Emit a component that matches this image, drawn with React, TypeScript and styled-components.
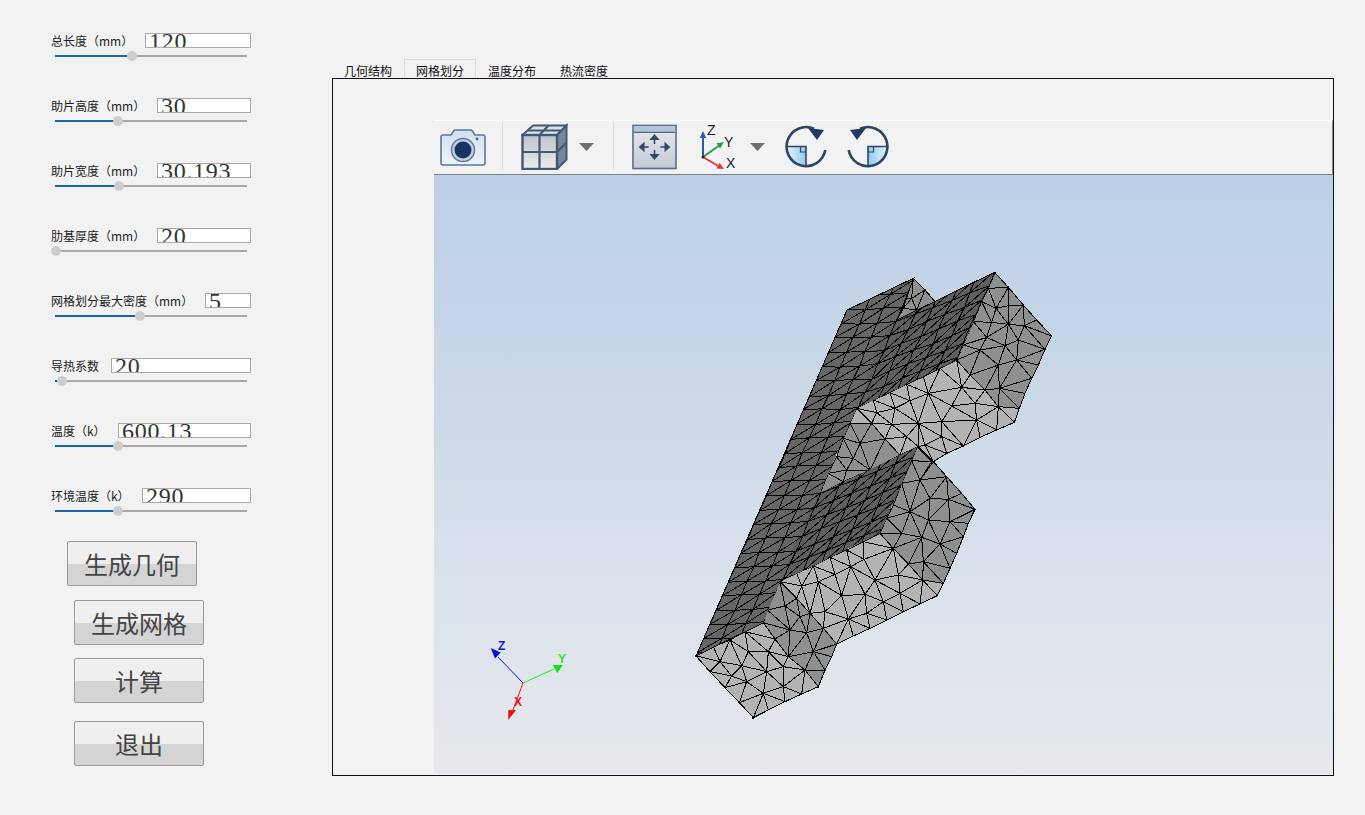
import React from "react";
import styled, { createGlobalStyle } from "styled-components";

type P = [number, number];

const Global = createGlobalStyle`
  html, body { margin: 0; padding: 0; background: #f2f2f2; }
  body { width: 1365px; height: 815px; overflow: hidden; font-family: "Noto Sans CJK SC", "Liberation Sans", sans-serif; }
`;

const Page = styled.div`
  display: flex;
  width: 1365px;
  height: 815px;
  background: #f2f2f2;
`;
const Sidebar = styled.aside`
  width: 332px;
  flex: none;
  padding: 33px 0 0 51px;
  box-sizing: border-box;
  display: flex;
  flex-direction: column;
`;
const ParamList = styled.div`
  width: 200px;
  display: flex;
  flex-direction: column;
  gap: 40px;
`;
const Param = styled.div`
  height: 25px;
  display: flex;
  flex-direction: column;
`;
const ParamHead = styled.div`
  height: 15px;
  display: flex;
  justify-content: space-between;
  align-items: center;
`;
const Label = styled.label`
  font-size: 12px;
  line-height: 15px;
  color: #222;
  white-space: nowrap;
`;
const Field = styled.div<{ $width: number }>`
  width: ${(p) => p.$width}px;
  height: 15px;
  box-sizing: border-box;
  border: 1px solid #a9a9a9;
  background: #fff;
  overflow: hidden;
  padding-left: 3px;
  font-family: "Liberation Serif", serif;
  font-size: 24px;
  letter-spacing: 0.7px;
  line-height: 14px;
  color: #333;
  white-space: nowrap;
`;
const Track = styled.div`
  position: relative;
  height: 2px;
  margin: 7px 4px 0;
  background: #a8a8a8;
`;
const Fill = styled.div<{ $pos: number }>`
  width: ${(p) => p.$pos}px;
  height: 2px;
  background: #1766ad;
`;
const Thumb = styled.div<{ $pos: number }>`
  position: absolute;
  left: ${(p) => p.$pos - 5}px;
  top: -4px;
  width: 10px;
  height: 10px;
  border-radius: 50%;
  background: #cdcdcd;
`;
const Actions = styled.div`
  display: flex;
  flex-direction: column;
  margin-top: 28px;
`;
const ActionButton = styled.button<{ $left: number; $top: number }>`
  width: 130px;
  height: 45px;
  margin: ${(p) => p.$top}px 0 0 ${(p) => p.$left}px;
  padding: 0;
  box-sizing: border-box;
  border: 1px solid #9a9a9a;
  border-radius: 2px;
  background: linear-gradient(#efefef 0, #efefef 52%, #d4d4d4 52%, #d4d4d4 100%);
  font-family: "Noto Sans CJK SC", "Liberation Sans", sans-serif;
  font-size: 24px;
  line-height: 41px;
  color: #444;
`;
const Main = styled.main`
  padding-top: 59px;
  display: flex;
  flex-direction: column;
`;
const TabBar = styled.div`
  display: flex;
  height: 19px;
`;
const Tab = styled.div<{ $active?: boolean }>`
  width: 72px;
  height: 19px;
  box-sizing: border-box;
  text-align: center;
  font-size: 12px;
  line-height: 21px;
  color: #111;
  background: ${(p) => (p.$active ? "#f2f2f2" : "transparent")};
  border: 1px solid ${(p) => (p.$active ? "#d9d9d9" : "transparent")};
  border-bottom: none;
`;
const Pane = styled.div`
  width: 1002px;
  height: 698px;
  box-sizing: border-box;
  border: 1px solid #111;
  padding: 41px 0 0 101px;
  display: flex;
  flex-direction: column;
`;
const Toolbar = styled.div`
  width: 899px;
  height: 55px;
  box-sizing: border-box;
  flex: none;
  display: flex;
  align-items: center;
  padding: 0 0 4px 6px;
  background: #f2f2f2;
  border-top: 1px solid #fff;
  border-right: 1px solid #8a8a8a;
  border-bottom: 1px solid #7f7f7f;
`;
const ToolIcon = styled.svg<{ $left?: number }>`
  display: block;
  flex: none;
  margin-left: ${(p) => p.$left ?? 0}px;
`;
const Separator = styled.div<{ $left: number }>`
  width: 1px;
  height: 47px;
  flex: none;
  margin-left: ${(p) => p.$left}px;
  background: #d8d8d8;
`;
const Viewport = styled.div`
  width: 899px;
  height: 599px;
  flex: none;
  background: linear-gradient(#bbcfe6 0%, #ccd9e8 40%, #dce3ec 72%, #e6e8ec 100%);
`;
const Scene = styled.svg`
  display: block;
  width: 899px;
  height: 599px;
`;

const z4 = (x: number, y: number): P => [680 + x / 3, 260 + y / 3];
const z5 = (x: number, y: number): P => [680 + x / 3, 440 + y / 3];
const mapAll = (f: (x: number, y: number) => P, a: number[][]) => a.map(([x, y]) => f(x, y));

function inPoly(p: P, poly: P[]) {
  let c = false;
  for (let i = 0, j = poly.length - 1; i < poly.length; j = i++) {
    const [xi, yi] = poly[i];
    const [xj, yj] = poly[j];
    if (yi > p[1] !== yj > p[1] && p[0] < ((xj - xi) * (p[1] - yi)) / (yj - yi) + xi) c = !c;
  }
  return c;
}

function delaunay(pts: P[]) {
  const all: P[] = [...pts, [-5000, -5000], [9000, -5000], [1000, 9000]];
  const n = pts.length;
  let tris: number[][] = [[n, n + 1, n + 2]];
  const inCircle = (t: number[], p: P) => {
    const [a, b, c] = t.map((i) => all[i]);
    const d = 2 * (a[0] * (b[1] - c[1]) + b[0] * (c[1] - a[1]) + c[0] * (a[1] - b[1]));
    const s = (q: P) => q[0] * q[0] + q[1] * q[1];
    const ux = (s(a) * (b[1] - c[1]) + s(b) * (c[1] - a[1]) + s(c) * (a[1] - b[1])) / d;
    const uy = (s(a) * (c[0] - b[0]) + s(b) * (a[0] - c[0]) + s(c) * (b[0] - a[0])) / d;
    return (p[0] - ux) ** 2 + (p[1] - uy) ** 2 < (a[0] - ux) ** 2 + (a[1] - uy) ** 2;
  };
  for (let i = 0; i < n; i++) {
    const bad = tris.filter((t) => inCircle(t, all[i]));
    const edges = new Map<string, number[]>();
    bad.forEach((t) => {
      [[t[0], t[1]], [t[1], t[2]], [t[2], t[0]]].forEach(([u, v]) => {
        const k = u < v ? `${u}_${v}` : `${v}_${u}`;
        if (edges.has(k)) edges.delete(k);
        else edges.set(k, [u, v]);
      });
    });
    tris = tris.filter((t) => !bad.includes(t));
    edges.forEach(([u, v]) => tris.push([u, v, i]));
  }
  return tris.filter((t) => t.every((i) => i < n)).map((t) => t.map((i) => pts[i]));
}

function meshPath(boundary: P[], interior: P[]) {
  const tris = delaunay([...boundary, ...interior]);
  let d = "";
  tris.forEach(([a, b, c]) => {
    const m: P = [(a[0] + b[0] + c[0]) / 3, (a[1] + b[1] + c[1]) / 3];
    if (inPoly(m, boundary)) d += `M${a[0]} ${a[1]}L${b[0]} ${b[1]}L${c[0]} ${c[1]}Z`;
  });
  return d;
}

const MED = "#8f8f8f";
const LIGHT = "#b3b3b3";
const DARK = "#666666";

const faces: { fill: string; b: P[]; i: P[] }[] = [
  {
    fill: MED,
    b: mapAll(z4, [[700, 55], [735, 90], [765, 125], [710, 150], [650, 180], [680, 115]]),
    i: mapAll(z4, [[670, 145], [695, 115]]),
  },
  {
    fill: MED,
    b: mapAll(z4, [[945, 38], [985, 82], [1030, 135], [1070, 180], [1115, 228], [1095, 268], [1075, 315], [1055, 355], [1035, 400], [1018, 445], [955, 440], [915, 390], [870, 345], [830, 300], [850, 255], [880, 185], [905, 125], [925, 85]]),
    i: mapAll(z4, [[985, 137], [948, 145], [1033, 197], [985, 193], [935, 187], [920, 232], [975, 257], [1015, 240], [900, 270], [955, 315], [1010, 300], [958, 385]]),
  },
  {
    fill: LIGHT,
    b: mapAll(z4, [[530, 445], [580, 420], [630, 398], [680, 373], [730, 350], [780, 325], [830, 300], [870, 345], [915, 390], [955, 440], [1018, 445], [1003, 487], [950, 510], [900, 532], [850, 558], [800, 580], [760, 605], [715, 560], [660, 585], [615, 537], [575, 490], [510, 490]]),
    i: mapAll(z4, [[590, 458], [645, 445], [690, 422], [745, 400], [845, 382], [815, 438], [885, 430], [715, 490], [785, 485], [890, 480], [635, 493], [735, 555], [785, 530], [680, 530]]),
  },
  {
    fill: MED,
    b: mapAll(z4, [[510, 490], [575, 490], [615, 537], [660, 585], [570, 630], [490, 665], [420, 700], [445, 640], [470, 590], [490, 535]]),
    i: mapAll(z4, [[520, 595], [500, 630], [540, 550]]),
  },
  {
    fill: MED,
    b: mapAll(z5, [[712, 20], [760, 65], [800, 110], [845, 160], [885, 208], [865, 250], [850, 290], [830, 340], [810, 385], [790, 430], [728, 420], [685, 372], [640, 325], [600, 280], [620, 235], [640, 195], [665, 130], [695, 62]]),
    i: mapAll(z5, [[755, 65], [720, 120], [750, 175], [805, 178], [690, 215], [745, 240], [810, 245], [725, 292], [780, 312], [730, 365], [665, 280]]),
  },
  {
    fill: LIGHT,
    b: mapAll(z5, [[300, 425], [350, 400], [400, 378], [450, 352], [500, 330], [550, 305], [600, 280], [640, 325], [685, 372], [728, 420], [790, 430], [772, 467], [720, 492], [670, 515], [620, 540], [570, 565], [520, 588], [470, 612], [430, 565], [390, 520], [350, 475]]),
    i: mapAll(z5, [[365, 438], [415, 425], [465, 403], [512, 380], [552, 358], [585, 420], [655, 405], [485, 467], [555, 463], [610, 485], [660, 460], [505, 537], [435, 515], [560, 520]]),
  },
  {
    fill: MED,
    b: mapAll(z5, [[300, 425], [350, 475], [390, 520], [430, 565], [470, 612], [455, 650], [435, 690], [415, 740], [375, 690], [325, 650], [285, 597], [250, 548], [262, 510]]),
    i: mapAll(z5, [[315, 498], [330, 570], [380, 578], [400, 635], [360, 530]]),
  },
  {
    fill: LIGHT,
    b: mapAll(z5, [[47, 647], [100, 620], [150, 600], [195, 575], [250, 548], [285, 597], [325, 650], [375, 690], [415, 740], [365, 762], [315, 785], [265, 810], [220, 833], [178, 788], [135, 743], [90, 695]]),
    i: mapAll(z5, [[120, 665], [185, 677], [155, 708], [205, 635], [265, 635], [260, 695], [310, 680], [200, 725], [250, 760], [310, 740]]),
  },
];

const darkPoly: P[] = [[847, 310], [914, 278], [897, 320], [995, 272], [982, 302], [957, 360], [857, 408], [850, 423], [820, 493], [917, 447], [912, 461], [880, 533], [780, 582], [763, 623], [696, 656]];

function jitter(r: number, c: number) {
  const s = Math.sin(r * 12.9898 + c * 78.233) * 43758.5453;
  return s - Math.floor(s) - 0.5;
}
function lattice(r: number, c: number): P {
  const x0 = 847 - 6.24 * r + 18.5 * c;
  const y0 = 310 + 14.3 * r - 0.6 * c;
  const dx = x0 - (847 - ((y0 - 310) * 151) / 346);
  const up = dx > 52 ? (dx - 52) * 0.36 : 0;
  return [x0 + jitter(r, c) * 1.6, y0 - up + jitter(c, r) * 1.6];
}
const darkLines = (() => {
  let d = "";
  for (let r = -10; r < 34; r++) {
    for (let c = -3; c < 16; c++) {
      const a = lattice(r, c);
      const b = lattice(r, c + 1);
      const e = lattice(r + 1, c);
      d += `M${a[0]} ${a[1]}L${b[0]} ${b[1]}M${a[0]} ${a[1]}L${e[0]} ${e[1]}M${e[0]} ${e[1]}L${b[0]} ${b[1]}`;
    }
  }
  return d;
})();
const toPts = (a: P[]) => a.map((p) => p.join(",")).join(" ");

const MeshModel = () => (
  <g shapeRendering="crispEdges">
    <defs>
      <clipPath id="darkClip">
        <polygon points={toPts(darkPoly)} />
      </clipPath>
    </defs>
    {faces.map((f, i) => (
      <g key={i}>
        <polygon points={toPts(f.b)} fill={f.fill} stroke="#000" strokeWidth={1} />
        <path d={meshPath(f.b, f.i)} fill="none" stroke="#000" strokeWidth={1} />
      </g>
    ))}
    <polygon points={toPts(darkPoly)} fill={DARK} />
    <polygon points="897,320 995,272 982,302 957,360 857,408 880,340" fill="#5e5e5e" />
    <polygon points="820,493 917,447 912,461 880,533 780,582 800,530" fill="#5e5e5e" />
    <path d={darkLines} fill="none" stroke="#000" strokeWidth={1} clipPath="url(#darkClip)" />
    <polyline points="847,310 914,278 897,320 995,272" fill="none" stroke="#000" strokeWidth={1} />
    <polyline points="847,310 696,656 763,623" fill="none" stroke="#000" strokeWidth={1} />
  </g>
);

const TriadLabel = styled.text`
  font-family: "Liberation Sans", sans-serif;
  font-size: 12px;
  font-weight: 700;
`;
const Triad = () => (
  <g>
    <line x1={523} y1={683} x2={498} y2={657} stroke="#1111dd" />
    <line x1={523} y1={683} x2={554} y2={669} stroke="#22ee22" />
    <line x1={523} y1={683} x2={513} y2={710} stroke="#ee1111" />
    <polygon points="490.7,648 500.7,652.5 495,658.5" fill="#0b0bd8" />
    <polygon points="552.7,665 562.7,665 557.3,673.3" fill="#16e016" />
    <polygon points="508.3,710 516,710 508.3,720" fill="#e81010" />
    <TriadLabel x={498} y={650} fill="#1515d0">Z</TriadLabel>
    <TriadLabel x={558} y={663} fill="#33e033">Y</TriadLabel>
    <TriadLabel x={514} y={706} fill="#e81515">X</TriadLabel>
  </g>
);

const AxisLabel = styled.text`
  font-family: "Liberation Sans", sans-serif;
  font-size: 14px;
  fill: #1a1a1a;
`;

const CameraIcon = () => (
  <ToolIcon width="46" height="40" viewBox="0 -2 46 40">
    <defs>
      <linearGradient id="camBody" x1="0" y1="0" x2="0" y2="1">
        <stop offset="0" stopColor="#cfe0f2" />
        <stop offset="1" stopColor="#eef3f8" />
      </linearGradient>
    </defs>
    <path d="M3 7h8l3-4.500q.5-.5 1-.5h16q.5 0 1 .5l3 4.500h8q2 0 2 2v26q0 2-2 2H3q-2 0-2-2V9q0-2 2-2z" fill="url(#camBody)" stroke="#5d7893" strokeWidth="1.6" />
    <circle cx="23" cy="22" r="11.5" fill="#c3d2e2" stroke="#5d7893" strokeWidth="1.4" />
    <circle cx="23" cy="22" r="8.5" fill="#1b3361" />
    <circle cx="37" cy="11" r="1.4" fill="#4a6580" />
  </ToolIcon>
);
const CubeIcon = () => (
  <ToolIcon $left={18} width="47" height="48" viewBox="0 -2 47 48">
    <defs>
      <linearGradient id="cubeFront" x1="0" y1="0" x2="0" y2="1">
        <stop offset="0" stopColor="#bfc4cc" />
        <stop offset="1" stopColor="#ebebeb" />
      </linearGradient>
    </defs>
    <path d="M12 1.500h33.500L36 11H1.500z" fill="#dfe3e8" stroke="#425873" strokeWidth="2" />
    <path d="M36 11l9.500-9.500v34L36 45z" fill="#76869b" stroke="#425873" strokeWidth="2" />
    <rect x="1.500" y="11" width="34.500" height="34" fill="url(#cubeFront)" stroke="#425873" strokeWidth="2.400" />
    <path d="M18.500 11v34M1.500 28H36M36 28l9.500-9.500M18.500 11l9-9.500M7 6.500h34" stroke="#425873" strokeWidth="2.200" fill="none" />
  </ToolIcon>
);
const Caret = ({ left }: { left: number }) => (
  <ToolIcon $left={left} width="15" height="12" viewBox="0 -3 15 12">
    <path d="M0 0h15L7.500 8z" fill="#6f6f6f" />
  </ToolIcon>
);
const FitIcon = () => (
  <ToolIcon $left={18} width="45" height="48" viewBox="0 -2 46 48">
    <defs>
      <linearGradient id="fitBody" x1="0" y1="0" x2="0" y2="1">
        <stop offset="0" stopColor="#e8eaee" />
        <stop offset="1" stopColor="#c4c9d5" />
      </linearGradient>
    </defs>
    <rect x="1" y="1" width="44" height="44" fill="url(#fitBody)" stroke="#546c88" strokeWidth="1.6" />
    <rect x="2" y="2" width="42" height="6" fill="#b5c5da" />
    <path d="M2 8h42" stroke="#546c88" strokeWidth="1.2" />
    <g fill="#2e4867" stroke="#2e4867" strokeWidth="1.6">
      <path d="M23 20V14" fill="none" />
      <path d="M23 11l-3.500 4h7z" />
      <path d="M23 32V26" fill="none" />
      <path d="M23 35l-3.500-4h7z" />
      <path d="M17 23H11" fill="none" />
      <path d="M8 23l4-3.500v7z" />
      <path d="M29 23H35" fill="none" />
      <path d="M38 23l-4-3.500v7z" />
    </g>
  </ToolIcon>
);
const AxesIcon = () => (
  <ToolIcon $left={23} width="38" height="48" viewBox="0 -2 38 48">
    <path d="M3 33V12" stroke="#2a5aa8" strokeWidth="2" fill="none" />
    <path d="M3 7l-3.200 7h6.400z" fill="#2a5aa8" />
    <path d="M3 33l17-12" stroke="#2f9a4a" strokeWidth="2" fill="none" />
    <path d="M24 18l-7.500 1.200 3.600 5.200z" fill="#2f9a4a" />
    <path d="M3 33l17 10" stroke="#dd3a3a" strokeWidth="2" fill="none" />
    <path d="M24 45l-7.600-.6 3.200-5.600z" fill="#dd3a3a" />
    <circle cx="3" cy="33" r="1.500" fill="#222" />
    <AxisLabel x="7" y="11">Z</AxisLabel>
    <AxisLabel x="24" y="23">Y</AxisLabel>
    <AxisLabel x="26" y="44">X</AxisLabel>
  </ToolIcon>
);
const RotateIcon = ({ left, mirror }: { left: number; mirror?: boolean }) => (
  <ToolIcon $left={left} width="44" height="44" viewBox="0 0 44 44">
    <defs>
      <linearGradient id={mirror ? "rotB" : "rotA"} x1="0" y1="0" x2="1" y2="0">
        <stop offset="0" stopColor="#e4f2fb" />
        <stop offset="1" stopColor="#8fcdec" />
      </linearGradient>
    </defs>
    <g transform={mirror ? "matrix(-1 0 0 1 44 0)" : undefined}>
      <path d="M2.500 22.500A19.500 19.500 0 0 0 22 42V22.500z" fill={`url(#${mirror ? "rotB" : "rotA"})`} />
      <path d="M30 4.800A19.500 19.500 0 1 0 41.300 26" fill="none" stroke="#2d4560" strokeWidth="2.600" />
      <path d="M2.500 22.500H22V42" fill="none" stroke="#2d4560" strokeWidth="1.600" />
      <path d="M16.500 22.500v5.500H22" fill="none" stroke="#2d4560" strokeWidth="1.200" />
      <path d="M24 4l16 2-7 10z" fill="#1f3c66" />
    </g>
  </ToolIcon>
);

const params = [
  { label: "总长度（mm）", value: "120", width: 106, pos: 77 },
  { label: "助片高度（mm）", value: "30", width: 94, pos: 63 },
  { label: "助片宽度（mm）", value: "30.193", width: 94, pos: 64 },
  { label: "肋基厚度（mm）", value: "20", width: 94, pos: 1 },
  { label: "网格划分最大密度（mm）", value: "5", width: 46, pos: 85 },
  { label: "导热系数", value: "20", width: 140, pos: 7 },
  { label: "温度（k）", value: "600.13", width: 133, pos: 63 },
  { label: "环境温度（k）", value: "290", width: 109, pos: 63 },
];
const actions = [
  { text: "生成几何", left: 16, top: 0 },
  { text: "生成网格", left: 23, top: 14 },
  { text: "计算", left: 23, top: 13 },
  { text: "退出", left: 23, top: 18 },
];
const tabs = ["几何结构", "网格划分", "温度分布", "热流密度"];

export default function App() {
  return (
    <Page>
      <Global />
      <Sidebar>
        <ParamList>
          {params.map((p) => (
            <Param key={p.label}>
              <ParamHead>
                <Label>{p.label}</Label>
                <Field $width={p.width}>{p.value}</Field>
              </ParamHead>
              <Track>
                <Fill $pos={p.pos} />
                <Thumb $pos={p.pos} />
              </Track>
            </Param>
          ))}
        </ParamList>
        <Actions>
          {actions.map((a) => (
            <ActionButton key={a.text} $left={a.left} $top={a.top}>
              {a.text}
            </ActionButton>
          ))}
        </Actions>
      </Sidebar>
      <Main>
        <TabBar>
          {tabs.map((t, i) => (
            <Tab key={t} $active={i === 1}>
              {t}
            </Tab>
          ))}
        </TabBar>
        <Pane>
          <Toolbar>
            <CameraIcon />
            <Separator $left={16} />
            <CubeIcon />
            <Caret left={11} />
            <Separator $left={19} />
            <FitIcon />
            <AxesIcon />
            <Caret left={12} />
            <RotateIcon left={19} />
            <RotateIcon left={18} mirror />
          </Toolbar>
          <Viewport>
            <Scene viewBox="434 175 899 599">
              <MeshModel />
              <Triad />
            </Scene>
          </Viewport>
        </Pane>
      </Main>
    </Page>
  );
}
